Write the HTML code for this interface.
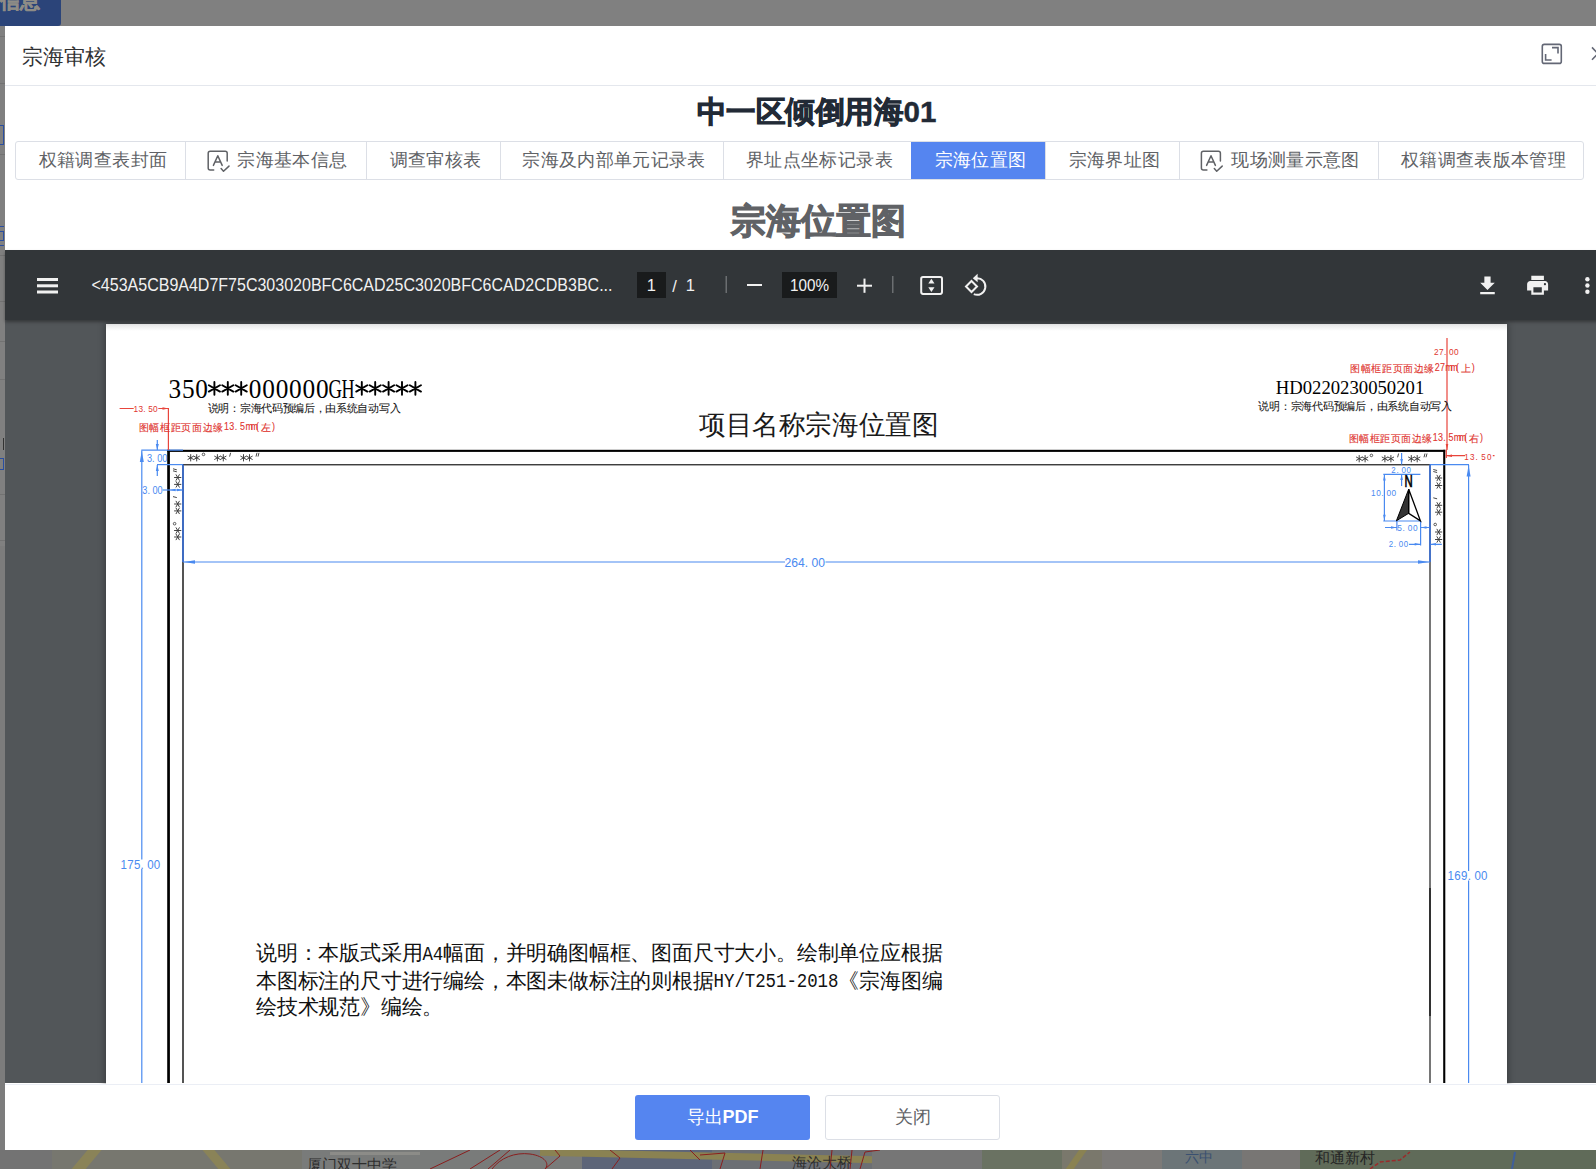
<!DOCTYPE html>
<html><head><meta charset="utf-8">
<style>
*{margin:0;padding:0;box-sizing:border-box}
html,body{width:1596px;height:1169px;overflow:hidden;background:#808080;font-family:"Liberation Sans",sans-serif;position:relative}
.abs{position:absolute}
#modal{position:absolute;left:5px;top:26px;width:1700px;height:1124px;background:#fff}
#hdr{position:absolute;left:22px;top:45px;font-size:20.5px;color:#303133;line-height:24px;white-space:nowrap}
#hdrline{position:absolute;left:5px;top:85px;width:1600px;height:1px;background:#e4e7ed}
#title{position:absolute;left:0;top:94px;width:1633px;text-align:center;font-size:30px;font-weight:bold;color:#222a36;line-height:36px;white-space:nowrap;transform:scaleX(0.985);-webkit-text-stroke:0.9px #222a36}
#tabs{position:absolute;left:15px;top:141px;width:1569px;height:39px;border:1px solid #dcdfe6;border-radius:3px;overflow:hidden}
.tab{position:absolute;top:0;height:37px;line-height:37px;font-size:18px;letter-spacing:0.35px;text-indent:4px;color:#606266;border-left:1px solid #dcdfe6;white-space:nowrap;text-align:center}
.tab.on{background:#5585f0;color:#fff;border-left-color:#5585f0}
#heading{position:absolute;left:2px;top:200px;width:1633px;text-align:center;font-size:34.5px;font-weight:bold;color:#606266;line-height:42px;white-space:nowrap;-webkit-text-stroke:1.1px #606266}
#tb{position:absolute;left:5px;top:250px;width:1600px;height:70px;background:#323639;box-shadow:0 2px 3px rgba(0,0,0,.35);z-index:2}
#vbody{position:absolute;left:5px;top:320px;width:1600px;height:763px;background:#525659;overflow:hidden}
#page{position:absolute;left:106px;top:324px;width:1401px;height:780px;background:#fff;box-shadow:0 0 7px 1px rgba(0,0,0,.32);background-image:linear-gradient(#e6e6e6,#fff 7px)}
#footer{position:absolute;left:5px;top:1084px;width:1600px;height:66px;background:#fff;border-top:1px solid #ebeef5}
.btn{position:absolute;top:1095px;height:45px;width:175px;border-radius:3px;font-size:18px;text-align:center;line-height:45px}
#map{position:absolute;left:0;top:1150px;width:1596px;height:19px;background:#6e7273;overflow:hidden}
svg{position:absolute;overflow:visible}
</style></head><body>
<!-- top-left blue button -->
<div class="abs" style="left:0;top:0;width:61px;height:26px;background:#2b4479;border-bottom-right-radius:3px;overflow:hidden">
  <div class="abs" style="left:0px;top:-11px;font-size:20px;font-weight:bold;color:#8e8c86;line-height:24px;-webkit-text-stroke:0.5px #8e8c86">信息</div>
</div>
<div class="abs" style="left:0;top:26px;width:5px;height:1124px;background:#7c7c7c"></div>
<div class="abs" style="left:0;top:26px;width:5px;height:520px;background:#808080"></div>
<div class="abs" style="left:0;top:36px;width:5px;height:1px;background:#727272"></div>
<div class="abs" style="left:0;top:83px;width:5px;height:1px;background:#727272"></div>
<div class="abs" style="left:0;top:154px;width:5px;height:1px;background:#727272"></div>
<div class="abs" style="left:0;top:255px;width:5px;height:1px;background:#727272"></div>
<div class="abs" style="left:0;top:301px;width:5px;height:1px;background:#727272"></div>
<div class="abs" style="left:0;top:341px;width:5px;height:1px;background:#727272"></div>
<div class="abs" style="left:0;top:379px;width:5px;height:1px;background:#727272"></div>
<div class="abs" style="left:0;top:494px;width:5px;height:1px;background:#727272"></div>
<div class="abs" style="left:0;top:540px;width:5px;height:1px;background:#727272"></div>
<div class="abs" style="left:0;top:125px;width:4px;height:20px;border:1px solid #2a4ea0;border-left:none;background:transparent"></div>
<div class="abs" style="left:0;top:226px;width:4px;height:20px;border-top:1.5px solid #2a4ea0;border-bottom:1.5px solid #2a4ea0"></div>
<div class="abs" style="left:0;top:231px;width:4px;height:10px;border:1px solid #2a4ea0;border-left:none"></div>
<div class="abs" style="left:0;top:458px;width:4px;height:12px;border:1px solid #2a4ea0;border-left:none"></div>
<div class="abs" style="left:0;top:438px;width:4px;height:12px;border-right:1px solid #333"></div>
<div id="modal"></div>
<div id="hdr">宗海审核</div>
<div id="hdrline"></div>
<svg style="left:0;top:0" width="1596" height="100" viewBox="0 0 1596 100">
  <g fill="none" stroke="#636775" stroke-width="1.6">
    <rect x="1542.3" y="44.4" width="19" height="19" rx="2"/>
    <path d="M1552 47.6H1558V53.6M1545.6 54.1V60H1551.6"/>
    <path d="M1592 47.4L1598 53.6M1592 59.8L1598 53.6"/>
  </g>
</svg>
<div id="title">中一区倾倒用海<span style="-webkit-text-stroke:0.4px #222a36">01</span></div>
<div id="tabs">
  <div class="tab" style="left:-1px;width:171px">权籍调查表封面</div>
  <div class="tab" style="left:169px;width:181px;padding-left:29px">宗海基本信息</div>
  <div class="tab" style="left:350px;width:134px">调查审核表</div>
  <div class="tab" style="left:484px;width:223px">宗海及内部单元记录表</div>
  <div class="tab" style="left:707px;width:188px">界址点坐标记录表</div>
  <div class="tab on" style="left:895px;width:134px">宗海位置图</div>
  <div class="tab" style="left:1029px;width:134px">宗海界址图</div>
  <div class="tab" style="left:1163px;width:199px;padding-left:29px">现场测量示意图</div>
  <div class="tab" style="left:1362px;width:206px">权籍调查表版本管理</div>
</div>
<svg style="left:0;top:0" width="1596" height="200" viewBox="0 0 1596 200">
  <g id="ic" fill="none" stroke="#606266" stroke-width="1.5" stroke-linecap="round" stroke-linejoin="round">
    <path d="M213.7 169.9H210.2Q208.2 169.9 208.2 167.9V153.3Q208.2 151.3 210.2 151.3H225.2Q227.2 151.3 227.2 153.3V161.1"/>
    <path d="M213.4 165.4L217.8 155.7L222.2 165.4M215.2 162.1H220.1"/>
    <path d="M221.1 168.5L223.5 171.2L229 166.1"/>
  </g>
  <use href="#ic" x="993.2"/>
</svg>
<div id="heading">宗海位置图</div>
<div id="tb"></div>
<div id="vbody"></div>
<div id="page"></div>
<!--DRAWING--><svg style="left:0;top:0;z-index:1" width="1596" height="1083" viewBox="0 0 1596 1083">
 <defs><clipPath id="pc"><rect x="106" y="324" width="1401" height="759"/></clipPath></defs>
 <g clip-path="url(#pc)">
  <!-- black frame -->
  <g fill="#000">
   <rect x="167.2" y="449.8" width="1278" height="2.1"/>
   <rect x="167.2" y="449.8" width="2.7" height="640"/>
   <rect x="1443.2" y="449.8" width="2.1" height="640"/>
  </g>
  <g fill="#2b2b2b">
   <rect x="182.2" y="464.1" width="1248.6" height="1.3"/>
   <rect x="182.2" y="464.1" width="1.6" height="640"/>
   <rect x="1429.2" y="464.1" width="1.6" height="640" fill="#555"/>
   <rect x="1429.2" y="888" width="1.6" height="128" fill="#222"/>
  </g>
  <!-- blue dims -->
  <g stroke="#4a8af0" stroke-width="1.2" fill="none">
   <path d="M141.8 450.5V859.4M141.8 869V1090"/>
   <path d="M141.3 450.2H183"/>
   <path d="M157.3 440V450M157.3 465V476"/>
   <path d="M157 464.6H183"/>
   <path d="M162.7 490H183"/>
   <path d="M1430 464.6H1469"/>
   <path d="M1468.6 465V871M1468.6 880.5V1090"/>
   <path d="M183 562H785M825.5 562H1430"/>
   <path d="M1401.6 453V464.6M1401.6 474.5V486"/>
   <path d="M1383.3 474.3H1420.4M1384.4 474.3V521M1383.3 521H1420.4"/>
   <path d="M1396.9 521V530.5M1420.6 521V545.4"/>
   <path d="M1385 527.5H1396.9M1420.6 527.5H1430"/>
   <path d="M1409 544.3H1420.6M1430 544.3H1441.8"/>
  </g>
  <g stroke="#3a72dc" stroke-width="1.6" fill="none">
   <path d="M183 464.6V562M1430 464.6V562"/>
  </g>
  <g fill="#4a8af0">
   <path d="M141.8 451L139.8 462L143.8 462Z"/>
   <path d="M1468.6 465.5L1466.6 476.5L1470.6 476.5Z"/>
   <path d="M157.3 450L155.8 444L158.8 444Z M157.3 465L155.8 471L158.8 471Z"/>
   <path d="M183.8 562L195 560.2L195 563.8Z M1429.2 562L1418 560.2L1418 563.8Z"/>
   <path d="M1401.6 464.6L1400.3 459L1402.9 459Z M1401.6 474.5L1400.3 480L1402.9 480Z"/>
   <path d="M1384.4 474.8L1383.1 480.5L1385.7 480.5Z M1384.4 520.5L1383.1 514.8L1385.7 514.8Z"/>
   <path d="M1396.5 527.5L1391 526.2L1391 528.8Z M1421 527.5L1426.5 526.2L1426.5 528.8Z"/>
   <path d="M1420.2 544.3L1414.7 543L1414.7 545.6Z M1430.6 544.3L1436 543L1436 545.6Z"/>
   <path d="M170 490L175.5 488.7L175.5 491.3Z M182.5 490L177 488.7L177 491.3Z"/>
  </g>
  <!-- red dims -->
  <g stroke="#e8453c" stroke-width="1.2" fill="none">
   <path d="M119.6 408.5H133.7M158.3 408.5H168.4M168.4 408V450"/>
   <path d="M1447 338V450M1445.5 455.7H1465M1492.8 455.7H1494.5M1446.3 449.5V458"/>
  </g>
  <g fill="#e8453c">
   <path d="M168.4 408.5L162.5 407.2L162.5 409.8Z"/>
   <path d="M1447 450L1445.7 444L1448.3 444Z"/>
   <path d="M1446 455.7L1452 454.4L1452 457Z"/>
  </g>
  <!-- compass -->
  <path d="M1408.7 489.2L1396.4 520.8L1408.7 513.3Z" fill="#333" stroke="#000" stroke-width="1" stroke-linejoin="miter"/>
  <path d="M1408.7 489.2L1420.4 520.8L1408.7 513.3Z" fill="#fff" stroke="#000" stroke-width="1.3" stroke-linejoin="miter"/>
  <path d="M1408.7 489.2V513.3" stroke="#000" stroke-width="1"/>
  <!-- texts -->
  <text transform="translate(1447.60,0) scale(0.92,1)" x="0.00 7.28 14.57 21.85 29.13 36.41" y="880" font-family="Liberation Sans" font-size="12.5" fill="#4a8af0">169.00</text>
  <text transform="translate(120.60,0) scale(0.92,1)" x="0.00 7.23 14.46 21.68 28.91 36.14" y="869" font-family="Liberation Sans" font-size="12.5" fill="#4a8af0">175.00</text>
  <text transform="translate(784.40,0) scale(0.92,1)" x="0.00 7.34 14.67 22.01 29.35 36.68" y="567" font-family="Liberation Sans" font-size="13.2" fill="#4a8af0">264.00</text>
  <text transform="translate(147.00,0) scale(0.92,1)" x="0.00 5.54 11.09 16.63" y="461.6" font-family="Liberation Sans" font-size="10" fill="#4a8af0">3.00</text>
  <text transform="translate(142.30,0) scale(0.92,1)" x="0.00 5.54 11.09 16.63" y="493.9" font-family="Liberation Sans" font-size="10" fill="#4a8af0">3.00</text>
  <text transform="translate(1391.30,0) scale(0.92,1)" x="0.00 5.54 11.09 16.63" y="472.6" font-family="Liberation Sans" font-size="8.6" fill="#4a8af0">2.00</text>
  <text transform="translate(1371.10,0) scale(0.92,1)" x="0.00 5.54 11.09 16.63 22.17" y="495.9" font-family="Liberation Sans" font-size="9" fill="#4a8af0">10.00</text>
  <text transform="translate(1397.30,0) scale(0.92,1)" x="0.00 5.65 11.30 16.96" y="530.7" font-family="Liberation Sans" font-size="9" fill="#4a8af0">5.00</text>
  <text transform="translate(1388.70,0) scale(0.92,1)" x="0.00 5.43 10.87 16.30" y="547.5" font-family="Liberation Sans" font-size="8.6" fill="#4a8af0">2.00</text>
  <text transform="translate(133.50,0) scale(0.92,1)" x="0.00 5.33 10.65 15.98 21.30" y="411.9" font-family="Liberation Sans" font-size="9" fill="#e0352f">13.50</text>
  <text transform="translate(1433.90,0) scale(0.92,1)" x="0.00 5.43 10.87 16.30 21.74" y="355" font-family="Liberation Sans" font-size="9" fill="#e0352f">27.00</text>
  <text transform="translate(1464.30,0) scale(0.92,1)" x="0.00 6.14 12.28 18.42 24.57" y="459.6" font-family="Liberation Sans" font-size="8.8" fill="#e0352f">13.50</text>
  <text x="256.00 276.80 297.60 318.40 339.20 360.00 380.80 401.60 443.20 464.00 484.80 505.60 526.40 547.20 568.00 588.80 609.60 630.40 651.20 672.00 692.80 713.60 734.40 755.20 776.00 796.80 817.60 838.40 859.20 880.00 900.80 921.60" y="960" font-family="Liberation Sans" font-size="21" font-weight="500" fill="#111">说明：本版式采用幅面，并明确图幅框、图面尺寸大小。绘制单位应根据</text>
  <text transform="translate(422.40,0) scale(0.83,1)" x="0.00 12.53" y="960" font-family="Liberation Mono" font-size="21" font-weight="500" fill="#111">A4</text>
  <text x="256.00 276.80 297.60 318.40 339.20 360.00 380.80 401.60 422.40 443.20 464.00 484.80 505.60 526.40 547.20 568.00 588.80 609.60 630.40 651.20 672.00 692.80 838.40 859.20 880.00 900.80 921.60" y="987.5" font-family="Liberation Sans" font-size="21" font-weight="500" fill="#111">本图标注的尺寸进行编绘，本图未做标注的则根据《宗海图编</text>
  <text transform="translate(713.60,0) scale(0.83,1)" x="0.00 12.53 25.06 37.59 50.12 62.65 75.18 87.71 100.24 112.77 125.30 137.83" y="987.5" font-family="Liberation Mono" font-size="21" font-weight="500" fill="#111">HY/T251-2018</text>
  <text x="256.00 276.80 297.60 318.40 339.20 360.00 380.80 401.60 422.40" y="1014" font-family="Liberation Sans" font-size="21" font-weight="500" fill="#111">绘技术规范》编绘。</text>
  <text x="207.80 218.49 229.18 239.87 250.56 261.25 271.94 282.63 293.32 304.01 314.70 325.39 336.08 346.77 357.46 368.15 378.84 389.53" y="412" font-family="Liberation Sans" font-size="10.8" font-weight="normal" fill="#111" stroke="#111" stroke-width="0.05">说明：宗海代码预编后，由系统自动写入</text>
  <text x="1258.40 1269.14 1279.88 1290.62 1301.36 1312.10 1322.84 1333.58 1344.32 1355.06 1365.80 1376.54 1387.28 1398.02 1408.76 1419.50 1430.24 1440.98" y="409.5" font-family="Liberation Sans" font-size="10.8" font-weight="normal" fill="#111" stroke="#111" stroke-width="0.05">说明：宗海代码预编后，由系统自动写入</text>
  <text x="138.60 149.28 159.96 170.64 181.32 192.00 202.68 213.36 261.42" y="430.5" font-family="Liberation Sans" font-size="10" font-weight="normal" fill="#e0352f" stroke="#e0352f" stroke-width="0.12">图幅框距页面边缘左</text>
  <text transform="translate(224.04,0) scale(0.85,1)" x="0.00 6.28 12.56 18.85 25.13 31.41 37.69" y="430.5" font-family="Liberation Sans" font-size="10.5" font-weight="normal" fill="#e0352f" stroke="#e0352f" stroke-width="0.12">13.5mm(</text>
  <text transform="translate(272.10,0) scale(0.85,1)" x="0.00" y="430.5" font-family="Liberation Sans" font-size="10.5" font-weight="normal" fill="#e0352f" stroke="#e0352f" stroke-width="0.12">)</text>
  <text x="1350.30 1360.86 1371.42 1381.98 1392.54 1403.10 1413.66 1424.22 1461.18" y="371.5" font-family="Liberation Sans" font-size="10" font-weight="normal" fill="#e0352f" stroke="#e0352f" stroke-width="0.12">图幅框距页面边缘上</text>
  <text transform="translate(1434.78,0) scale(0.85,1)" x="0.00 6.21 12.42 18.64 24.85" y="371.5" font-family="Liberation Sans" font-size="10.5" font-weight="normal" fill="#e0352f" stroke="#e0352f" stroke-width="0.12">27mm(</text>
  <text transform="translate(1471.74,0) scale(0.85,1)" x="0.00" y="371.5" font-family="Liberation Sans" font-size="10.5" font-weight="normal" fill="#e0352f" stroke="#e0352f" stroke-width="0.12">)</text>
  <text x="1348.50 1359.02 1369.54 1380.06 1390.58 1401.10 1411.62 1422.14 1469.48" y="441.5" font-family="Liberation Sans" font-size="10" font-weight="normal" fill="#e0352f" stroke="#e0352f" stroke-width="0.12">图幅框距页面边缘右</text>
  <text transform="translate(1432.66,0) scale(0.85,1)" x="0.00 6.19 12.38 18.56 24.75 30.94 37.13" y="441.5" font-family="Liberation Sans" font-size="10.5" font-weight="normal" fill="#e0352f" stroke="#e0352f" stroke-width="0.12">13.5mm(</text>
  <text transform="translate(1480.00,0) scale(0.85,1)" x="0.00" y="441.5" font-family="Liberation Sans" font-size="10.5" font-weight="normal" fill="#e0352f" stroke="#e0352f" stroke-width="0.12">)</text>
  <path d="M214.40 382.00L214.40 394.80M208.86 385.20L219.94 391.60M208.86 391.60L219.94 385.20M227.80 382.00L227.80 394.80M222.26 385.20L233.34 391.60M222.26 391.60L233.34 385.20M241.20 382.00L241.20 394.80M235.66 385.20L246.74 391.60M235.66 391.60L246.74 385.20M361.80 382.00L361.80 394.80M356.26 385.20L367.34 391.60M356.26 391.60L367.34 385.20M375.20 382.00L375.20 394.80M369.66 385.20L380.74 391.60M369.66 391.60L380.74 385.20M388.60 382.00L388.60 394.80M383.06 385.20L394.14 391.60M383.06 391.60L394.14 385.20M402.00 382.00L402.00 394.80M396.46 385.20L407.54 391.60M396.46 391.60L407.54 385.20M415.40 382.00L415.40 394.80M409.86 385.20L420.94 391.60M409.86 391.60L420.94 385.20" stroke="#000" stroke-width="1.9" stroke-linecap="round" fill="none"/>
  <text x="168.5 183.1 197.7" y="397.9" font-family="Liberation Serif" font-size="27.5" fill="#000" transform="translate(168,0) scale(0.92,1) translate(-168,0)">350</text>
  <text x="255.9 270.5 285.1 299.6 314.2 328.8" y="397.9" font-family="Liberation Serif" font-size="27.5" fill="#000" transform="translate(168,0) scale(0.92,1) translate(-168,0)">000000</text>
  <text x="0" y="397.9" font-family="Liberation Serif" font-size="27.5" fill="#000" transform="translate(328.6,0) scale(0.68,1)">G</text>
  <text x="0" y="397.9" font-family="Liberation Serif" font-size="27.5" fill="#000" transform="translate(341.6,0) scale(0.66,1)">H</text>
  <path d="M190.70 454.20L190.70 461.40M187.58 456.00L193.82 459.60M187.58 459.60L193.82 456.00M196.70 454.20L196.70 461.40M193.58 456.00L199.82 459.60M193.58 459.60L199.82 456.00M217.40 454.20L217.40 461.40M214.28 456.00L220.52 459.60M214.28 459.60L220.52 456.00M223.30 454.20L223.30 461.40M220.18 456.00L226.42 459.60M220.18 459.60L226.42 456.00M243.50 454.20L243.50 461.40M240.38 456.00L246.62 459.60M240.38 459.60L246.62 456.00M249.50 454.20L249.50 461.40M246.38 456.00L252.62 459.60M246.38 459.60L252.62 456.00" stroke="#3a3a3a" stroke-width="0.95" fill="none"/>
  <circle cx="203.5" cy="454.4" r="1.3" fill="none" stroke="#333" stroke-width="0.8"/>
  <path d="M230.6 452.8L229.6 456.6M257 452.8L256 456.6M259 452.8L258 456.6" stroke="#333" stroke-width="0.9"/>
  <path d="M1359.20 455.10L1359.20 462.30M1356.08 456.90L1362.32 460.50M1356.08 460.50L1362.32 456.90M1365.10 455.10L1365.10 462.30M1361.98 456.90L1368.22 460.50M1361.98 460.50L1368.22 456.90M1384.90 455.10L1384.90 462.30M1381.78 456.90L1388.02 460.50M1381.78 460.50L1388.02 456.90M1390.90 455.10L1390.90 462.30M1387.78 456.90L1394.02 460.50M1387.78 460.50L1394.02 456.90M1411.30 455.10L1411.30 462.30M1408.18 456.90L1414.42 460.50M1408.18 460.50L1414.42 456.90M1417.20 455.10L1417.20 462.30M1414.08 456.90L1420.32 460.50M1414.08 460.50L1420.32 456.90" stroke="#3a3a3a" stroke-width="0.95" fill="none"/>
  <circle cx="1371.4" cy="455.4" r="1.3" fill="none" stroke="#333" stroke-width="0.8"/>
  <path d="M1398.6 453.5L1397.6 457.3M1425 453.5L1424 457.3M1427 453.5L1426 457.3" stroke="#333" stroke-width="0.9"/>
  <path d="M181.30 477.50L174.10 477.50M179.50 474.38L175.90 480.62M175.90 474.38L179.50 480.62M181.30 484.40L174.10 484.40M179.50 481.28L175.90 487.52M175.90 481.28L179.50 487.52M181.30 504.00L174.10 504.00M179.50 500.88L175.90 507.12M175.90 500.88L179.50 507.12M181.30 510.90L174.10 510.90M179.50 507.78L175.90 514.02M175.90 507.78L179.50 514.02M181.30 530.50L174.10 530.50M179.50 527.38L175.90 533.62M175.90 527.38L179.50 533.62M181.30 537.00L174.10 537.00M179.50 533.88L175.90 540.12M175.90 533.88L179.50 540.12" stroke="#3a3a3a" stroke-width="0.95" fill="none"/>
  <circle cx="174.6" cy="523.7" r="1.3" fill="none" stroke="#333" stroke-width="0.8"/>
  <path d="M173 496.6L176.8 497.6M173 468.8L176.8 469.8M173 470.8L176.8 471.8" stroke="#333" stroke-width="0.9"/>
  <path d="M1442.20 478.00L1435.00 478.00M1440.40 474.88L1436.80 481.12M1436.80 474.88L1440.40 481.12M1442.20 485.50L1435.00 485.50M1440.40 482.38L1436.80 488.62M1436.80 482.38L1440.40 488.62M1442.20 505.30L1435.00 505.30M1440.40 502.18L1436.80 508.42M1436.80 502.18L1440.40 508.42M1442.20 512.20L1435.00 512.20M1440.40 509.08L1436.80 515.32M1436.80 509.08L1440.40 515.32M1442.20 532.00L1435.00 532.00M1440.40 528.88L1436.80 535.12M1436.80 528.88L1440.40 535.12M1442.20 539.50L1435.00 539.50M1440.40 536.38L1436.80 542.62M1436.80 536.38L1440.40 542.62" stroke="#3a3a3a" stroke-width="0.95" fill="none"/>
  <circle cx="1435.2" cy="524.5" r="1.3" fill="none" stroke="#333" stroke-width="0.8"/>
  <path d="M1433.3 497.8L1437.1 498.8M1433.3 469.5L1437.1 470.5M1433.3 471.5L1437.1 472.5" stroke="#333" stroke-width="0.9"/>
  <g font-family="Liberation Sans" fill="#4a8af0" font-size="9.2">
  </g>
  <g font-family="Liberation Sans" fill="#e8453c">
  </g>
  <g fill="#000">
   <text x="1275.7" y="394" font-family="Liberation Serif" font-size="19.5" textLength="148.6" lengthAdjust="spacingAndGlyphs">HD0220230050201</text>
   <text x="699" y="434" font-family="Liberation Serif" font-size="26.5" textLength="239.3" lengthAdjust="spacingAndGlyphs" fill="#1a1a1a">项目名称宗海位置图</text>
   <text x="1404.6" y="486.9" font-family="Liberation Sans" font-size="16.5" textLength="8.2" lengthAdjust="spacingAndGlyphs" stroke="#000" stroke-width="0.7">N</text>
   <g font-family="Liberation Sans" font-size="21" fill="#111">
   </g>
  </g>
 </g>
</svg>
<!--/DRAWING-->
<svg style="left:0;top:0;z-index:3" width="1596" height="330" viewBox="0 0 1596 330">
  <g fill="#f1f1f1">
    <rect x="37" y="278" width="21" height="3"/>
    <rect x="37" y="284.3" width="21" height="3"/>
    <rect x="37" y="290.5" width="21" height="3"/>
  </g>
  <text x="91.5" y="291" font-size="18" fill="#f1f1f1" textLength="521" lengthAdjust="spacingAndGlyphs" font-family="Liberation Sans">&lt;453A5CB9A4D7F75C303020BFC6CAD25C3020BFC6CAD2CDB3BC...</text>
  <rect x="637" y="272" width="29" height="26" fill="#191b1c"/>
  <text x="651.3" y="291" font-size="16.5" fill="#f1f1f1" text-anchor="middle">1</text>
  <text x="674.5" y="291.5" font-size="16.5" fill="#f1f1f1" text-anchor="middle">/</text>
  <text x="690.3" y="291" font-size="16.5" fill="#f1f1f1" text-anchor="middle">1</text>
  <rect x="725.5" y="276" width="1.5" height="17" fill="#6b6e71"/>
  <rect x="747" y="284" width="15" height="2" fill="#f1f1f1"/>
  <rect x="782" y="272" width="55" height="26" fill="#191b1c"/>
  <text x="809.5" y="291" font-size="16.5" fill="#f1f1f1" text-anchor="middle" textLength="39" lengthAdjust="spacingAndGlyphs">100%</text>
  <rect x="857" y="284.7" width="15" height="2" fill="#f1f1f1"/>
  <rect x="863.5" y="278.6" width="2" height="14.2" fill="#f1f1f1"/>
  <rect x="892" y="276" width="1.5" height="17" fill="#6b6e71"/>
  <rect x="921.2" y="277" width="20.8" height="16.9" rx="1.8" fill="none" stroke="#f1f1f1" stroke-width="2"/>
  <path d="M931.4 278.8L934.5 283.6H928.3Z M931.4 292L934.5 287.3H928.3Z" fill="#f1f1f1"/>
  <path d="M971.5 281L977 286.5L971.5 292L966 286.5Z" fill="none" stroke="#f1f1f1" stroke-width="2"/>
  <path d="M976.5 278.2A8.3 8.3 0 1 1 973.8 294.1" fill="none" stroke="#f1f1f1" stroke-width="2"/>
  <path d="M977.6 273.7L977.6 282.2L972.8 278.3Z" fill="#f1f1f1"/>
  <g fill="#f1f1f1" transform="translate(1475,273.4) scale(1.04)">
    <path d="M19 9h-4V3H9v6H5l7 7 7-7zM5 18v2h14v-2H5z"/>
  </g>
  <g fill="#f1f1f1" transform="translate(1525,272.6) scale(1.05)">
    <path d="M19 8H5c-1.66 0-3 1.34-3 3v6h4v4h12v-4h4v-6c0-1.66-1.34-3-3-3zm-3 11H8v-5h8v5zm3-7c-.55 0-1-.45-1-1s.45-1 1-1 1 .45 1 1-.45 1-1 1zm-1-9H6v4h12V3z"/>
  </g>
  <g fill="#f1f1f1">
    <circle cx="1587.4" cy="279.2" r="2.2"/><circle cx="1587.4" cy="285.5" r="2.2"/><circle cx="1587.4" cy="291.8" r="2.2"/>
  </g>
</svg>

<div id="footer"></div>
<div class="btn" style="left:635px;background:#5585f0;color:#fff;line-height:45px">导出<b>PDF</b></div>
<div class="btn" style="left:825px;background:#fff;color:#606266;border:1px solid #dcdfe6;line-height:43px">关闭</div>
<div id="map">
 <div class="abs" style="left:0;top:0;width:52px;height:19px;background:#737373"></div>
 <div class="abs" style="left:52px;top:0;width:250px;height:19px;background:#77776f"></div>
 <div class="abs" style="left:80px;top:-6px;width:14px;height:30px;background:#8a8358;transform:skewX(-40deg)"></div>
 <div class="abs" style="left:210px;top:-6px;width:12px;height:30px;background:#8a8358;transform:skewX(40deg)"></div>
 <div class="abs" style="left:302px;top:0;width:280px;height:19px;background:#797b7a"></div>
 <div class="abs" style="left:330px;top:2px;width:90px;height:3px;background:#8c8c88"></div>
 <div class="abs" style="left:582px;top:0;width:130px;height:19px;background:#5d6578"></div>
 <div class="abs" style="left:712px;top:0;width:160px;height:19px;background:#6c6f74"></div>
 <div class="abs" style="left:540px;top:4px;width:470px;height:7px;background:#8a8252;transform:rotate(1.3deg)"></div>
 <div class="abs" style="left:872px;top:0;width:110px;height:19px;background:#767676"></div>
 <div class="abs" style="left:982px;top:0;width:80px;height:19px;background:#6a7262"></div>
 <div class="abs" style="left:1062px;top:0;width:40px;height:19px;background:#7a786c"></div>
 <div class="abs" style="left:1072px;top:-4px;width:8px;height:28px;background:#8a8252;transform:skewX(-35deg)"></div>
 <div class="abs" style="left:1102px;top:0;width:60px;height:19px;background:#7c7a78"></div>
 <div class="abs" style="left:1162px;top:0;width:80px;height:19px;background:#6c7578"></div>
 <div class="abs" style="left:1242px;top:0;width:58px;height:19px;background:#787674"></div>
 <div class="abs" style="left:1300px;top:0;width:296px;height:19px;background:#606b59"></div>
 <div class="abs" style="left:1315px;top:0px;font-size:15px;color:#262626;line-height:15px;white-space:nowrap">和通新村</div>
 <div class="abs" style="left:792px;top:5px;font-size:15px;color:#2e2e2e;line-height:16px;white-space:nowrap">海沧大桥</div>
 <div class="abs" style="left:307px;top:7px;font-size:15px;color:#2e2e2e;line-height:16px;white-space:nowrap">厦门双十中学</div>
 <div class="abs" style="left:1185px;top:0;font-size:14px;color:#3a5070;line-height:15px;white-space:nowrap">六中</div>
 <svg style="left:0;top:0" width="1596" height="19"><g fill="none" stroke="#8a1e1e" stroke-width="1"><path d="M430 19L470 0M470 19L500 0M488 19L510 0M492 19C500 8 515 2 530 4C545 6 550 14 545 19M555 0L560 6L545 19M610 0L620 8L612 19M690 0L700 10M720 19L725 3L700 5M760 19L763 0M830 19L832 0M850 19L852 0M860 19L865 2L880 0"/><path d="M1370 19L1380 12L1400 10L1410 2" stroke="#9a2b2b" stroke-dasharray="4 2" stroke-width="1.5"/><path d="M1512 19L1515 2" stroke="#3f5f9a" stroke-width="2"/></g></svg>
</div>
</body></html>
